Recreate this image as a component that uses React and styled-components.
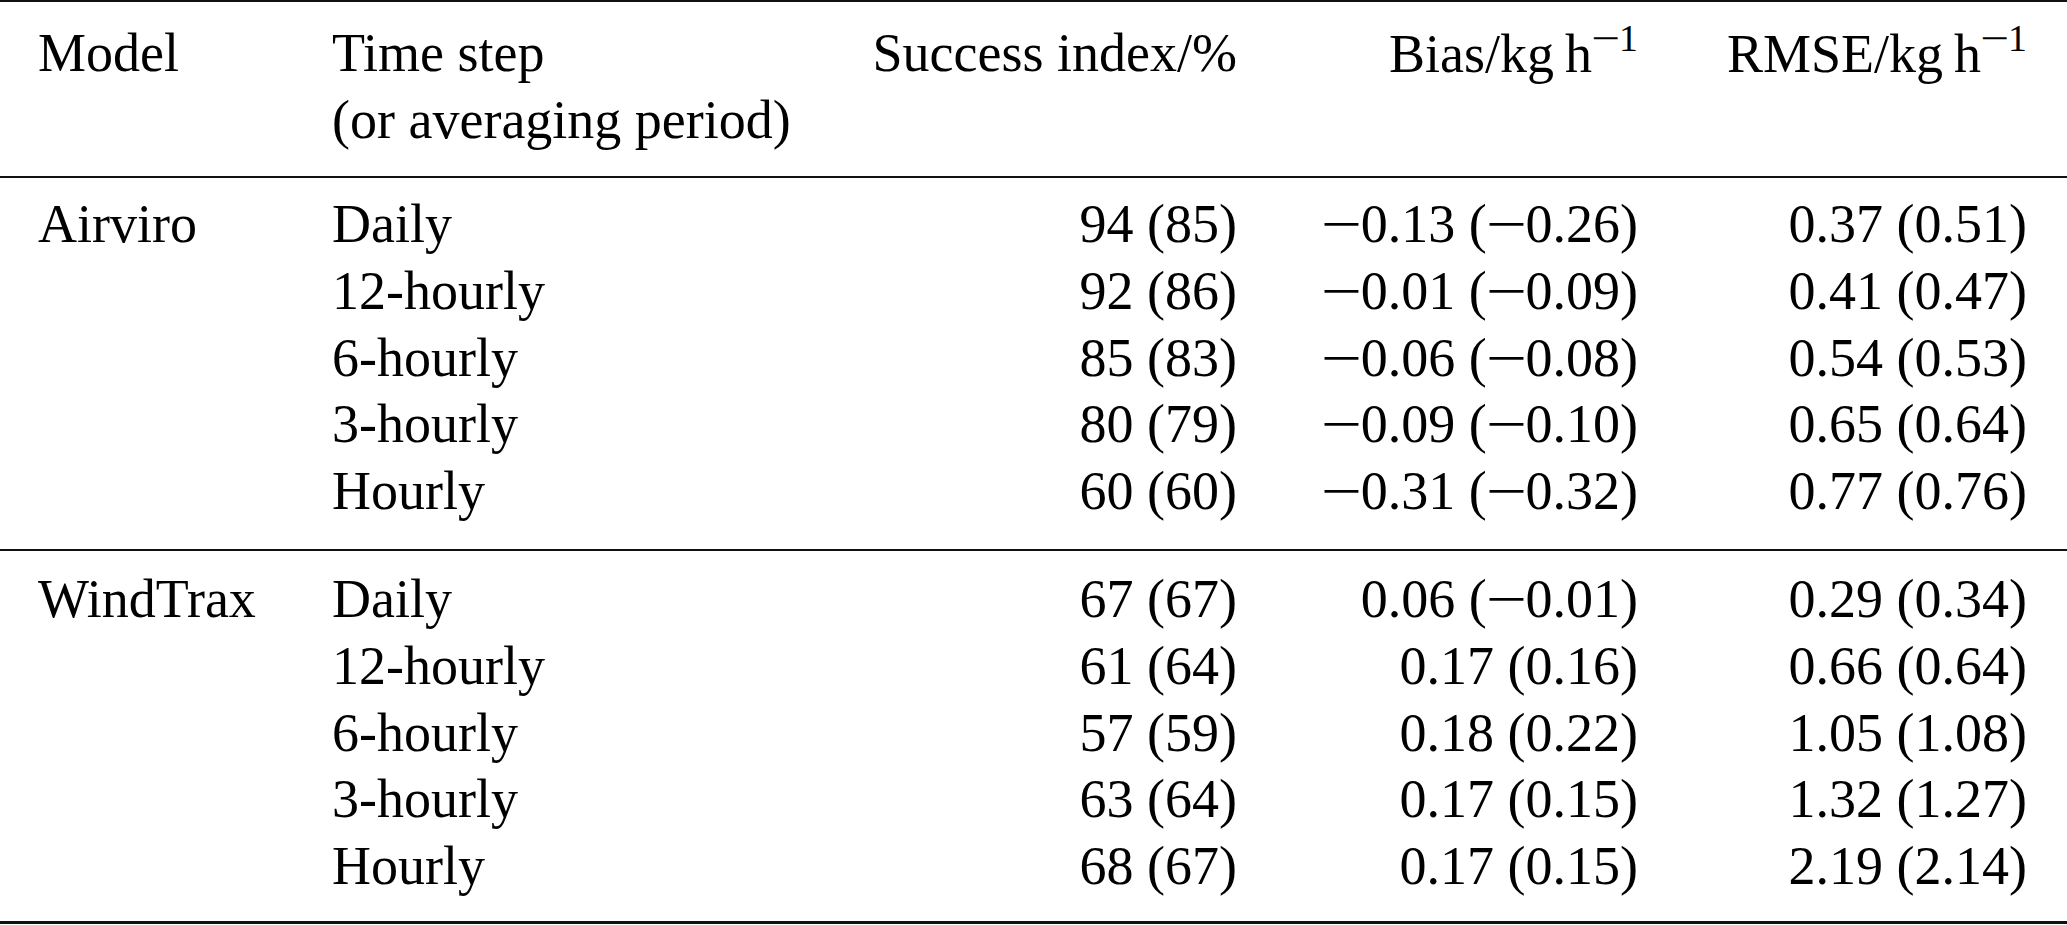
import React from "react";
import styled, { createGlobalStyle } from "styled-components";

const GlobalStyle = createGlobalStyle`
    html, body {
        margin: 0;
        padding: 0;
        background: #ffffff;
    }
    body {
        font-family: "Liberation Serif", "Times New Roman", serif;
        color: #000000;
    }
`

const TableWrap = styled.div`
    width: 2067px;
    display: flex;
    flex-direction: column;
`

const Rule = styled.div`
    height: ${(p) => p.$weight}px;
    background-color: #111111;
`

const Section = styled.div`
    display: grid;
    grid-template-columns: 294px 468px 437px 401px 389px;
    grid-auto-rows: 66.7px;
    align-items: start;
    padding: ${(p) => p.$top}px 40px ${(p) => p.$bottom}px 38px;
    font-size: 54px;
    line-height: 66.7px;
`

const Cell = styled.div`
    white-space: nowrap;
    text-align: ${(p) => (p.$right ? "right" : "left")};
    grid-row: ${(p) => p.$row || "auto"};
    grid-column: ${(p) => p.$col || "auto"};
`

const Sup = styled.span`
    font-size: 0.7em;
    line-height: 1;
    vertical-align: 0.55em;
`

const MinusGlyph = styled.span`
    display: inline-block;
    width: 0.72em;
    text-align: center;
    transform: scaleX(1.35);
`

const Minus = () => <MinusGlyph>−</MinusGlyph>

// turn "-0.13 (-0.26)" into text with wide math minus signs
function Num({ value }) {
    const parts = value.split("-")
    return (
        <>
            {parts.map((p, i) => (
                <React.Fragment key={i}>
                    {i > 0 && <Minus />}
                    {p}
                </React.Fragment>
            ))}
        </>
    )
}

const Unit = () => (
    <>
        kg{"\u2009"}h<Sup><Minus />1</Sup>
    </>
)

const groups = [
    {
        model: "Airviro",
        top: 13.4,
        bottom: 24.1,
        rows: [
            ["Daily", "94 (85)", "-0.13 (-0.26)", "0.37 (0.51)"],
            ["12-hourly", "92 (86)", "-0.01 (-0.09)", "0.41 (0.47)"],
            ["6-hourly", "85 (83)", "-0.06 (-0.08)", "0.54 (0.53)"],
            ["3-hourly", "80 (79)", "-0.09 (-0.10)", "0.65 (0.64)"],
            ["Hourly", "60 (60)", "-0.31 (-0.32)", "0.77 (0.76)"],
        ],
    },
    {
        model: "WindTrax",
        top: 15.4,
        bottom: 21.1,
        rows: [
            ["Daily", "67 (67)", "0.06 (-0.01)", "0.29 (0.34)"],
            ["12-hourly", "61 (64)", "0.17 (0.16)", "0.66 (0.64)"],
            ["6-hourly", "57 (59)", "0.18 (0.22)", "1.05 (1.08)"],
            ["3-hourly", "63 (64)", "0.17 (0.15)", "1.32 (1.27)"],
            ["Hourly", "68 (67)", "0.17 (0.15)", "2.19 (2.14)"],
        ],
    },
]

export default function App() {
    return (
        <>
            <GlobalStyle />
            <TableWrap>
                <Rule $weight={2} />
                <Section $top={18} $bottom={22.6}>
                    <Cell $row={1} $col={1}>Model</Cell>
                    <Cell $row={1} $col={2}>Time step</Cell>
                    <Cell $row={2} $col={2}>(or averaging period)</Cell>
                    <Cell $row={1} $col={3} $right>Success index/%</Cell>
                    <Cell $row={1} $col={4} $right>Bias/<Unit /></Cell>
                    <Cell $row={1} $col={5} $right>RMSE/<Unit /></Cell>
                </Section>
                {groups.map((g, gi) => (
                    <React.Fragment key={g.model}>
                        <Rule $weight={2} />
                        <Section $top={g.top} $bottom={g.bottom}>
                            {g.rows.map((r, ri) => (
                                <React.Fragment key={ri}>
                                    <Cell $row={ri + 1} $col={1}>{ri === 0 ? g.model : ""}</Cell>
                                    <Cell $row={ri + 1} $col={2}>{r[0]}</Cell>
                                    <Cell $row={ri + 1} $col={3} $right><Num value={r[1]} /></Cell>
                                    <Cell $row={ri + 1} $col={4} $right><Num value={r[2]} /></Cell>
                                    <Cell $row={ri + 1} $col={5} $right><Num value={r[3]} /></Cell>
                                </React.Fragment>
                            ))}
                        </Section>
                    </React.Fragment>
                ))}
                <Rule $weight={3} />
            </TableWrap>
        </>
    )
}
